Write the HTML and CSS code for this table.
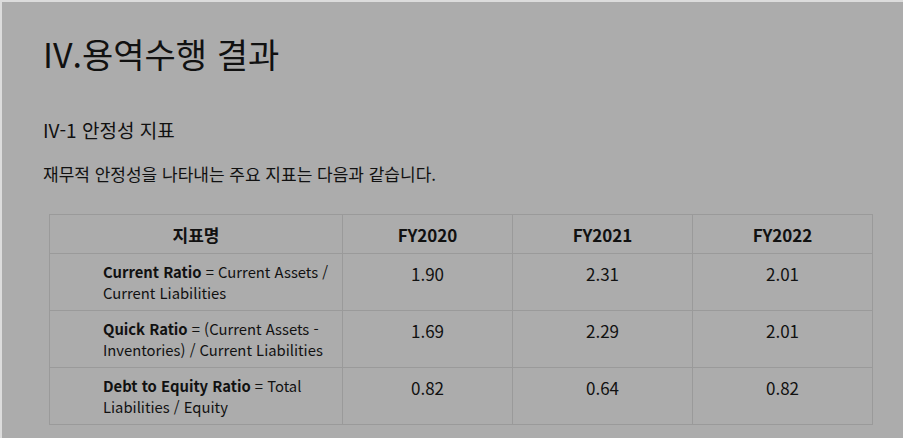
FILE: index.html
```html
<!DOCTYPE html>
<html lang="ko">
<head>
<meta charset="utf-8">
<title>IV.용역수행 결과</title>
<link rel="stylesheet" href="styles.css">
</head>
<body>
<main class="page">
  <h1 class="title">IV.용역수행 결과</h1>
  <h2 class="subtitle">IV-1 안정성 지표</h2>
  <p class="lead">재무적 안정성을 나타내는 주요 지표는 다음과 같습니다.</p>
  <table class="metrics">
    <thead>
      <tr>
        <th class="col-name">지표명</th>
        <th class="col-year">FY2020</th>
        <th class="col-year2">FY2021</th>
        <th>FY2022</th>
      </tr>
    </thead>
    <tbody>
      <tr>
        <td class="name"><strong>Current Ratio</strong> = Current Assets / Current Liabilities</td>
        <td class="num">1.90</td>
        <td class="num">2.31</td>
        <td class="num">2.01</td>
      </tr>
      <tr>
        <td class="name"><strong>Quick Ratio</strong> = (Current Assets - Inventories) / Current Liabilities</td>
        <td class="num">1.69</td>
        <td class="num">2.29</td>
        <td class="num">2.01</td>
      </tr>
      <tr>
        <td class="name"><strong>Debt to Equity Ratio</strong> = Total Liabilities / Equity</td>
        <td class="num">0.82</td>
        <td class="num">0.64</td>
        <td class="num">0.82</td>
      </tr>
    </tbody>
  </table>
</main>
</body>
</html>
```

FILE: styles.css
```css
html, body {
  margin: 0;
  padding: 0;
}

body {
  background: #acacac;
  color: #111;
  font-family: "Noto Sans CJK KR", "Noto Sans", sans-serif;
  border-top: 2px solid #dcdcdc;
  border-left: 2px solid #dcdcdc;
  height: 100vh;
  box-sizing: border-box;
  overflow: hidden;
}

.page {
  display: flex;
  flex-direction: column;
  align-items: flex-start;
  padding: 32px 0 0 41px;
}

.title {
  margin: 0;
  font-size: 34px;
  font-weight: 400;
  line-height: 40px;
}

.subtitle {
  margin: 42px 0 0;
  font-size: 19px;
  font-weight: 400;
  line-height: 27px;
}

.lead {
  margin: 18px 0 0;
  font-size: 17px;
  line-height: 25px;
}

.metrics {
  margin: 28px 0 0 6px;
  width: 824px;
  border-collapse: collapse;
  table-layout: fixed;
}

.metrics th,
.metrics td {
  border: 1px solid #9a9a9a;
}

.metrics th {
  height: 38px;
  padding: 0;
  font-size: 17px;
  font-weight: 700;
  text-align: center;
  vertical-align: middle;
}

.col-name { width: 292px; }
.col-year { width: 169px; }
.col-year2 { width: 179px; }

.metrics td.name {
  padding: 7px 8px 7px 53px;
  font-size: 14.8px;
  line-height: 21px;
  text-align: left;
  vertical-align: middle;
}

.metrics td.num {
  padding: 7px 0 0;
  font-size: 17px;
  line-height: 25px;
  text-align: center;
  vertical-align: top;
}
```
